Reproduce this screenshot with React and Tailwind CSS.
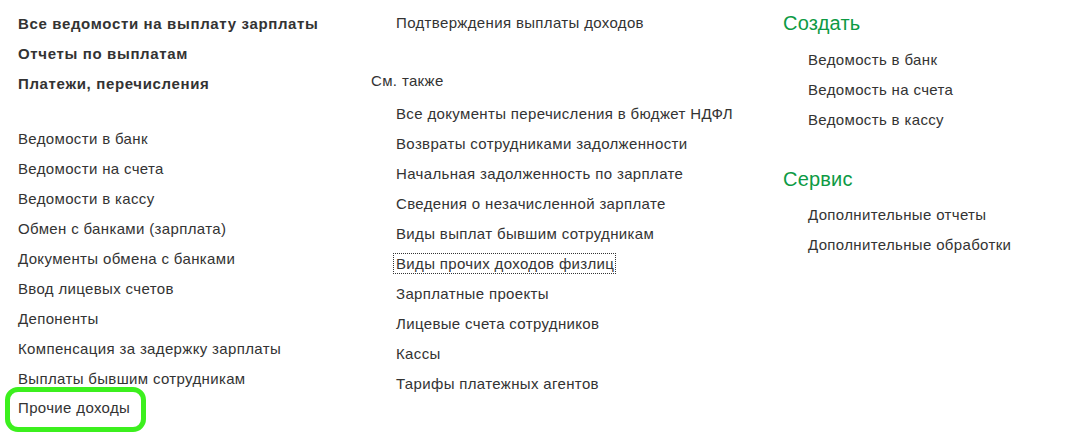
import React from "react";

const bold = [
  "Все ведомости на выплату зарплаты",
  "Отчеты по выплатам",
  "Платежи, перечисления",
];

const col1 = [
  "Ведомости в банк",
  "Ведомости на счета",
  "Ведомости в кассу",
  "Обмен с банками (зарплата)",
  "Документы обмена с банками",
  "Ввод лицевых счетов",
  "Депоненты",
  "Компенсация за задержку зарплаты",
  "Выплаты бывшим сотрудникам",
];

const seeAlso = [
  "Все документы перечисления в бюджет НДФЛ",
  "Возвраты сотрудниками задолженности",
  "Начальная задолженность по зарплате",
  "Сведения о незачисленной зарплате",
  "Виды выплат бывшим сотрудникам",
  "Виды прочих доходов физлиц",
  "Зарплатные проекты",
  "Лицевые счета сотрудников",
  "Кассы",
  "Тарифы платежных агентов",
];

const create = ["Ведомость в банк", "Ведомость на счета", "Ведомость в кассу"];
const service = ["Дополнительные отчеты", "Дополнительные обработки"];

function App() {
  return (
    <div
      className="flex w-[1069px] h-[434px] bg-white text-[15px] tracking-[0.35px] text-[#333] overflow-hidden"
      style={{ fontFamily: '"Liberation Sans", Arial, sans-serif' }}
    >
      <div className="w-[353px] shrink-0 ml-[18px] pt-[9px] flex flex-col">
        {bold.map((t) => (
          <div key={t} className="leading-[30px] font-bold tracking-[0.65px]">{t}</div>
        ))}
        <div className="h-[25px]" />
        {col1.map((t) => (
          <div key={t} className="leading-[30px]">{t}</div>
        ))}
        <div className="ml-[-13px] w-[141px] h-[45px] mt-[-7px] border-[5px] border-[#3cf01e] rounded-[13px] flex items-center pl-[8px] pb-[2px]">
          Прочие доходы
        </div>
      </div>

      <div className="w-[412px] shrink-0 pt-[8px] flex flex-col">
        <div className="leading-[30px] pl-[25px]">Подтверждения выплаты доходов</div>
        <div className="leading-[30px] mt-[28px]">См. также</div>
        <div className="mt-[3px] pl-[25px] flex flex-col">
          {seeAlso.map((t) => (
            <div key={t} className="leading-[30px]">
              {t === "Виды прочих доходов физлиц" ? (
                <span className="outline outline-1 outline-dotted outline-[#333] outline-offset-[1px] ml-[-1px] pl-[1px]">
                  {t}
                </span>
              ) : (
                t
              )}
            </div>
          ))}
        </div>
      </div>

      <div className="flex-1 pt-[8px] flex flex-col">
        <div className="leading-[30px] text-[20px] tracking-[0.2px] text-[#0d9a44]">Создать</div>
        <div className="mt-[7px] pl-[25px] flex flex-col">
          {create.map((t) => (
            <div key={t} className="leading-[30px]">{t}</div>
          ))}
        </div>
        <div className="leading-[30px] text-[20px] tracking-[0.2px] text-[#0d9a44] mt-[29px]">Сервис</div>
        <div className="mt-[6px] pl-[25px] flex flex-col">
          {service.map((t) => (
            <div key={t} className="leading-[30px]">{t}</div>
          ))}
        </div>
      </div>
    </div>
  );
}

export default App;
